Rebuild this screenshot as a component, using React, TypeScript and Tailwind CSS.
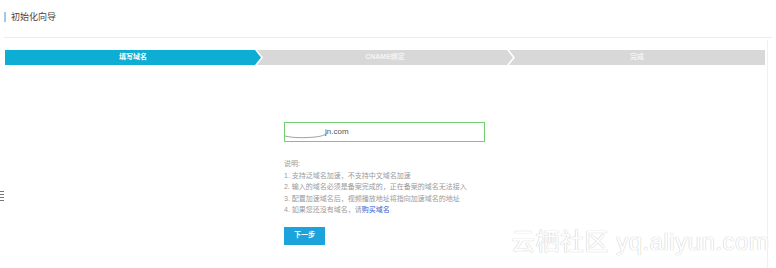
import React from "react";

const steps = [
  { title: "填写域名", active: true },
  { title: "CNAME绑定", active: false },
  { title: "完成", active: false },
];

const notes = [
  "1. 支持泛域名加速，不支持中文域名加速",
  "2. 输入的域名必须是备案完成的，正在备案的域名无法接入",
  "3. 配置加速域名后，视频播放地址将指向加速域名的地址",
];

function StepBar() {
  return (
    <div className="flex h-[15px] ml-[5px] mr-[11px]">
      {steps.map((step, i) => (
        <div
          key={i}
          className={
            (i === 0
              ? "[clip-path:polygon(0_0,calc(100%-6px)_0,100%_50%,calc(100%-6px)_100%,0_100%)] "
              : i === steps.length - 1
              ? "-ml-[4px] [clip-path:polygon(0_0,100%_0,100%_100%,0_100%,6px_50%)] "
              : "-ml-[4px] [clip-path:polygon(0_0,calc(100%-6px)_0,100%_50%,calc(100%-6px)_100%,0_100%,6px_50%)] ") +
            (step.active ? "bg-[#0eaed4] text-white" : "bg-[#d8d8d8] text-[#f4f4f4]") +
            " flex-1 flex items-center justify-center text-[7px] font-bold"
          }
        >
          {step.title}
        </div>
      ))}
    </div>
  );
}

export default function App() {
  return (
    <div className="relative w-[776px] h-[268px] bg-white overflow-hidden font-['Liberation_Sans','Noto_Sans_CJK_SC',sans-serif]">
      <div className="h-[38px] mx-[4px] pt-[12px] border-b border-[#ececec]">
        <div className="border-l-2 border-[#a9c6e0] pl-[5px] text-[9px] leading-[10px] text-[#444]">初始化向导</div>
      </div>
      <div className="mt-[12px]">
        <StepBar />
      </div>

      <div className="ml-[284px] mt-[57px] w-[201px]">
        <div className="relative flex items-center h-[20px] border border-[#70d070] pl-[40px] text-[8px] text-[#555]">
          <svg className="absolute left-0 top-[6px]" width="44" height="10" viewBox="0 0 44 10">
            <path d="M0 7 C8 9 20 9 30 8 C36 7.5 40 6 42 4" fill="none" stroke="#888" strokeWidth="0.8" />
          </svg>
          jn.com
        </div>

        <div className="mt-[16px] text-[7px] leading-[11.5px] text-[#9a9a9a] whitespace-nowrap">
          <div>说明:</div>
          {notes.map((n, i) => (
            <div key={i}>{n}</div>
          ))}
          <div>
            <span>4. 如果您还没有域名，请</span>
            <span className="text-[#2b5bd6]">购买域名</span>
          </div>
        </div>

        <button className="mt-[11px] h-[18px] w-[41px] bg-[#1ca3dc] text-white text-[7px] font-bold flex items-center justify-center">
          下一步
        </button>
      </div>

      <div className="absolute left-[511px] top-[229px] text-[24px] leading-[26px] text-white tracking-[0.5px] [text-shadow:0_0_1px_#c8c8c8,0_0_1px_#c8c8c8]">
        云栖社区 yq.aliyun.com
      </div>

      <div className="absolute left-0 top-[191px] flex flex-col gap-[2px]">
        <div className="w-[4px] h-[1px] bg-[#777]" />
        <div className="w-[4px] h-[1px] bg-[#777]" />
        <div className="w-[4px] h-[1px] bg-[#777]" />
        <div className="w-[4px] h-[1px] bg-[#777]" />
      </div>
      <div className="absolute left-[767px] top-[40px] w-[1px] h-[228px] bg-[#f0f0f0]" />
    </div>
  );
}
